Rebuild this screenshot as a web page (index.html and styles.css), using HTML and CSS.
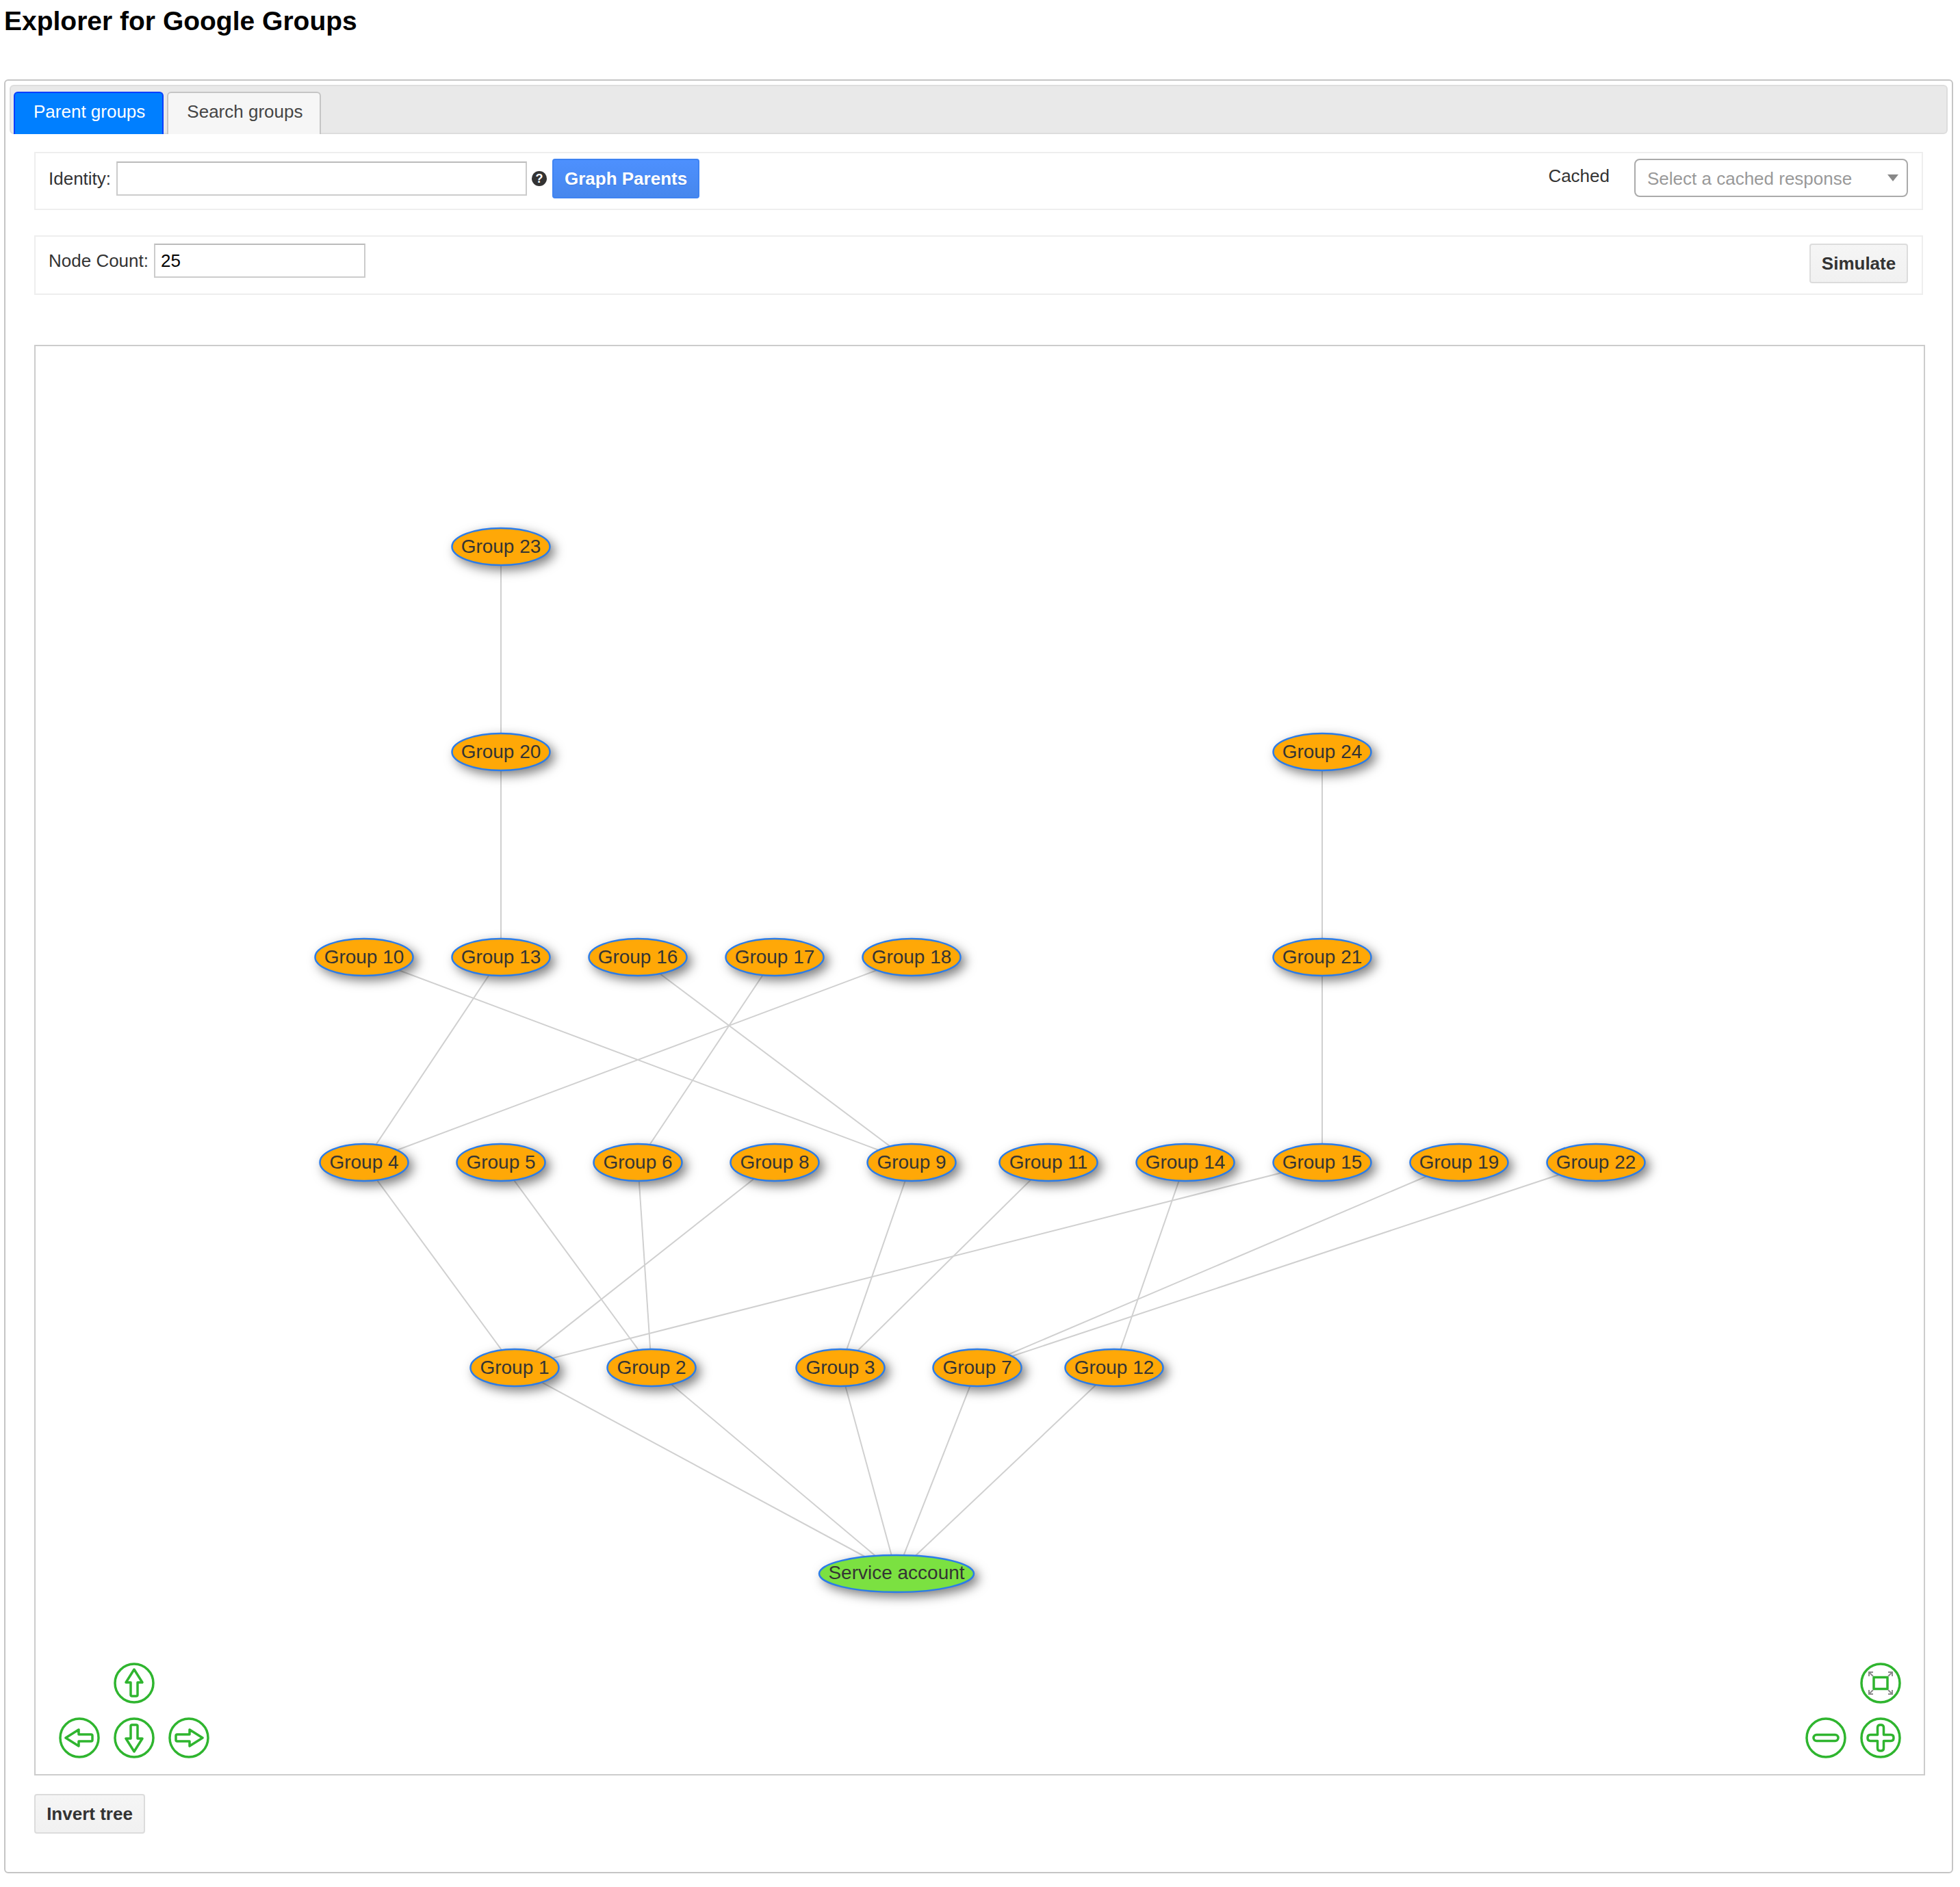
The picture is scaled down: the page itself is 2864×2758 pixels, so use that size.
FILE: index.html
```html
<!DOCTYPE html>
<html lang="en">
<head>
<meta charset="utf-8">
<title>Explorer for Google Groups</title>
<link rel="stylesheet" href="styles.css">
</head>
<body>
<h1 class="title">Explorer for Google Groups</h1>
<main class="panel">
  <nav class="tabbar">
    <a class="tab tab-active">Parent groups</a>
    <a class="tab">Search groups</a>
  </nav>
  <div class="content">
    <section class="box box-identity">
      <div class="field">
        <label class="label">Identity:</label>
        <input class="input input-identity" type="text">
        <span class="help">?</span>
      </div>
      <button class="btn btn-primary">Graph Parents</button>
      <span class="cached-label">Cached</span>
      <div class="select"><span>Select a cached response</span><i class="select-arrow"></i></div>
    </section>
    <section class="box box-count">
      <div class="field field-count">
        <label class="label">Node Count:</label>
        <input class="input input-count" type="text" value="25">
      </div>
      <button class="btn btn-plain btn-simulate">Simulate</button>
    </section>
    <section class="graph">
      <svg class="graph-svg" viewBox="52 506 2759 2087" width="2759" height="2087" xmlns="http://www.w3.org/2000/svg">
        <defs>
          <g id="arrow"><circle class="nav-ring" r="28"/><path class="nav-line" d="M0-20 L12-1 L5-1 L5 17 Q5 19 3 19 L-3 19 Q-5 19-5 17 L-5-1 L-12-1 Z"/></g>
          <g id="minus"><circle class="nav-ring" r="28"/><rect class="nav-line" x="-18" y="-4.5" width="36" height="9" rx="4.5"/></g>
          <g id="plus"><circle class="nav-ring" r="28"/><path class="nav-line" d="M-4.500-4.500 L-4.500-15 Q-4.500-19 0-19 Q4.500-19 4.500-15 L4.500-4.500 L15-4.500 Q19-4.500 19 0 Q19 4.500 15 4.500 L4.500 4.500 L4.500 15 Q4.500 19 0 19 Q-4.500 19-4.500 15 L-4.500 4.500 L-15 4.500 Q-19 4.500-19 0 Q-19-4.500-15-4.500 Z"/></g>
          <g id="fit"><circle class="nav-ring" r="28"/><rect class="nav-line" x="-10" y="-8.500" width="20" height="17"/>
            <path class="nav-grey" d="M-11-10 L-17-16 M-17-10 L-17-16 L-11-16 M11-10 L17-16 M17-10 L17-16 L11-16 M-11 10 L-17 16 M-17 10 L-17 16 L-11 16 M11 10 L17 16 M17 10 L17 16 L11 16"/></g>
        </defs>
        <g class="edges">
          <line x1="732" y1="799" x2="732" y2="1099"/>
          <line x1="732" y1="1099" x2="732" y2="1399"/>
          <line x1="1932" y1="1099" x2="1932" y2="1399"/>
          <line x1="1932" y1="1399" x2="1932" y2="1699"/>
          <line x1="532" y1="1399" x2="1332" y2="1699"/>
          <line x1="732" y1="1399" x2="532" y2="1699"/>
          <line x1="932" y1="1399" x2="1332" y2="1699"/>
          <line x1="1132" y1="1399" x2="932" y2="1699"/>
          <line x1="1332" y1="1399" x2="532" y2="1699"/>
          <line x1="532" y1="1699" x2="752" y2="1999"/>
          <line x1="732" y1="1699" x2="952" y2="1999"/>
          <line x1="932" y1="1699" x2="952" y2="1999"/>
          <line x1="1132" y1="1699" x2="752" y2="1999"/>
          <line x1="1332" y1="1699" x2="1228" y2="1999"/>
          <line x1="1532" y1="1699" x2="1228" y2="1999"/>
          <line x1="1732" y1="1699" x2="1628" y2="1999"/>
          <line x1="1932" y1="1699" x2="752" y2="1999"/>
          <line x1="2132" y1="1699" x2="1428" y2="1999"/>
          <line x1="2332" y1="1699" x2="1428" y2="1999"/>
          <line x1="752" y1="1999" x2="1310" y2="2300"/>
          <line x1="952" y1="1999" x2="1310" y2="2300"/>
          <line x1="1228" y1="1999" x2="1310" y2="2300"/>
          <line x1="1428" y1="1999" x2="1310" y2="2300"/>
          <line x1="1628" y1="1999" x2="1310" y2="2300"/>
        </g>
        <g class="nodes">
          <ellipse class="node" cx="732" cy="799" rx="71.5" ry="27"/><text class="node-text" x="732" y="808">Group 23</text>
          <ellipse class="node" cx="732" cy="1099" rx="71.5" ry="27"/><text class="node-text" x="732" y="1108">Group 20</text>
          <ellipse class="node" cx="1932" cy="1099" rx="71.5" ry="27"/><text class="node-text" x="1932" y="1108">Group 24</text>
          <ellipse class="node" cx="532" cy="1399" rx="71.5" ry="27"/><text class="node-text" x="532" y="1408">Group 10</text>
          <ellipse class="node" cx="732" cy="1399" rx="71.5" ry="27"/><text class="node-text" x="732" y="1408">Group 13</text>
          <ellipse class="node" cx="932" cy="1399" rx="71.5" ry="27"/><text class="node-text" x="932" y="1408">Group 16</text>
          <ellipse class="node" cx="1132" cy="1399" rx="71.5" ry="27"/><text class="node-text" x="1132" y="1408">Group 17</text>
          <ellipse class="node" cx="1332" cy="1399" rx="71.5" ry="27"/><text class="node-text" x="1332" y="1408">Group 18</text>
          <ellipse class="node" cx="1932" cy="1399" rx="71.5" ry="27"/><text class="node-text" x="1932" y="1408">Group 21</text>
          <ellipse class="node" cx="532" cy="1699" rx="64.500" ry="27"/><text class="node-text" x="532" y="1708">Group 4</text>
          <ellipse class="node" cx="732" cy="1699" rx="64.500" ry="27"/><text class="node-text" x="732" y="1708">Group 5</text>
          <ellipse class="node" cx="932" cy="1699" rx="64.500" ry="27"/><text class="node-text" x="932" y="1708">Group 6</text>
          <ellipse class="node" cx="1132" cy="1699" rx="64.500" ry="27"/><text class="node-text" x="1132" y="1708">Group 8</text>
          <ellipse class="node" cx="1332" cy="1699" rx="64.500" ry="27"/><text class="node-text" x="1332" y="1708">Group 9</text>
          <ellipse class="node" cx="1532" cy="1699" rx="71.5" ry="27"/><text class="node-text" x="1532" y="1708">Group 11</text>
          <ellipse class="node" cx="1732" cy="1699" rx="71.5" ry="27"/><text class="node-text" x="1732" y="1708">Group 14</text>
          <ellipse class="node" cx="1932" cy="1699" rx="71.5" ry="27"/><text class="node-text" x="1932" y="1708">Group 15</text>
          <ellipse class="node" cx="2132" cy="1699" rx="71.5" ry="27"/><text class="node-text" x="2132" y="1708">Group 19</text>
          <ellipse class="node" cx="2332" cy="1699" rx="71.5" ry="27"/><text class="node-text" x="2332" y="1708">Group 22</text>
          <ellipse class="node" cx="752" cy="1999" rx="64.500" ry="27"/><text class="node-text" x="752" y="2008">Group 1</text>
          <ellipse class="node" cx="952" cy="1999" rx="64.500" ry="27"/><text class="node-text" x="952" y="2008">Group 2</text>
          <ellipse class="node" cx="1228" cy="1999" rx="64.500" ry="27"/><text class="node-text" x="1228" y="2008">Group 3</text>
          <ellipse class="node" cx="1428" cy="1999" rx="64.500" ry="27"/><text class="node-text" x="1428" y="2008">Group 7</text>
          <ellipse class="node" cx="1628" cy="1999" rx="71.5" ry="27"/><text class="node-text" x="1628" y="2008">Group 12</text>
          <ellipse class="node node-root" cx="1310" cy="2300" rx="113" ry="27"/><text class="node-text" x="1310" y="2308">Service account</text>
        </g>
        <use href="#arrow" transform="translate(196 2460)"/>
        <use href="#arrow" transform="translate(116 2540) rotate(-90)"/>
        <use href="#arrow" transform="translate(196 2540) rotate(180)"/>
        <use href="#arrow" transform="translate(276 2540) rotate(90)"/>
        <use href="#fit" transform="translate(2748 2460)"/>
        <use href="#minus" transform="translate(2668 2540)"/>
        <use href="#plus" transform="translate(2748 2540)"/>
      </svg>
    </section>
    <button class="btn btn-plain btn-invert">Invert tree</button>
  </div>
</main>
</body>
</html>
```

FILE: styles.css
```css
* { box-sizing: border-box; }
html, body { margin: 0; padding: 0; background: #fff; }
body {
  width: 2864px;
  height: 2758px;
  font-family: "Liberation Sans", Arial, sans-serif;
  font-size: 26px;
  color: #333;
  overflow: hidden;
}
.title {
  margin: 0;
  padding: 7px 0 0 6px;
  height: 116px;
  font-size: 39px;
  line-height: 48px;
  font-weight: 700;
  color: #000;
}
.panel {
  margin-left: 6px;
  width: 2848px;
  height: 2622px;
  border: 2px solid #c5c5c5;
  border-radius: 6px;
  padding: 6px;
}
.tabbar {
  display: flex;
  align-items: flex-end;
  gap: 5px;
  height: 72px;
  padding: 8px 0 0 4px;
  background: #e9e9e9;
  border: 2px solid #ddd;
  border-radius: 6px;
}
.tab {
  display: block;
  height: 62px;
  margin-bottom: -2px;
  padding: 0 25px 0 27px;
  line-height: 54px;
  background: #f6f6f6;
  color: #454545;
  border: 2px solid #c5c5c5;
  border-bottom: 0;
  border-radius: 6px 6px 0 0;
}
.tab-active {
  background: #007fff;
  border-color: #003eff;
  border-bottom: 0;
  color: #fff;
}
.content {
  padding: 26px 0 0 36px;
}
.box {
  display: flex;
  width: 2760px;
  border: 2px solid #eee;
  padding: 8px 20px 15px 19px;
}
.box-identity {
  height: 85px;
  align-items: flex-start;
}
.box-count {
  margin-top: 37px;
  height: 87px;
  padding-top: 10px;
  justify-content: space-between;
}
.field {
  display: flex;
  align-items: center;
  height: 58px;
}
.field-count { height: 50px; }
.label { margin-right: 8px; }
.input {
  height: 50px;
  border: 2px solid #ccc;
  border-top-color: #bbb;
  border-radius: 0;
  padding: 0 8px;
  background: #fff;
  font: inherit;
  color: #000;
}
.input-identity { width: 600px; }
.input-count { width: 309px; }
.help {
  width: 22px;
  height: 22px;
  margin-left: 7px;
  border-radius: 50%;
  background: #333;
  color: #fff;
  font-size: 18px;
  font-weight: 700;
  line-height: 22px;
  text-align: center;
}
.btn {
  display: block;
  height: 58px;
  padding: 0;
  border-radius: 4px;
  font: 700 26px "Liberation Sans", Arial, sans-serif;
}
.btn-primary {
  width: 215px;
  margin-left: 8px;
  color: #fff;
  background: linear-gradient(#4d90fe, #4787ed);
  border: 2px solid #3f83f2;
  text-shadow: 0 1px 1px rgba(0, 0, 0, 0.1);
}
.btn-plain {
  color: #333;
  background: linear-gradient(#f5f5f5, #f1f1f1);
  border: 2px solid #dcdcdc;
}
.btn-simulate { width: 144px; }
.btn-invert {
  width: 162px;
  height: 58px;
  margin-top: 27px;
}
.cached-label {
  margin-left: auto;
  margin-right: 36px;
  line-height: 50px;
}
.select {
  position: relative;
  width: 400px;
  height: 56px;
  border: 2px solid #aaa;
  border-radius: 8px;
  padding-left: 17px;
  line-height: 54px;
  color: #999;
}
.select-arrow {
  position: absolute;
  top: 21px;
  right: 12px;
  border-style: solid;
  border-width: 10px 8px 0;
  border-color: #888 transparent transparent;
}
.graph {
  width: 2763px;
  height: 2091px;
  margin-top: 73px;
  border: 2px solid #ccc;
}
.graph-svg { display: block; }
.edges line {
  stroke: #d0d0d0;
  stroke-width: 2;
}
.node {
  fill: #ffa807;
  stroke: #2b7ce9;
  stroke-width: 2.5;
  filter: drop-shadow(6px 6px 8px rgba(0, 0, 0, 0.5));
}
.node-root { fill: #7be141; }
.node-text {
  fill: #343434;
  font-family: "Liberation Sans", Arial, sans-serif;
  font-size: 28px;
  text-anchor: middle;
}
.nav-ring {
  fill: #fff;
  stroke: #2fb52f;
  stroke-width: 3.5;
}
.nav-line {
  fill: none;
  stroke: #2fb52f;
  stroke-width: 3.5;
  stroke-linejoin: round;
}
.nav-grey {
  fill: none;
  stroke: #8a8a8a;
  stroke-width: 2;
}
```
